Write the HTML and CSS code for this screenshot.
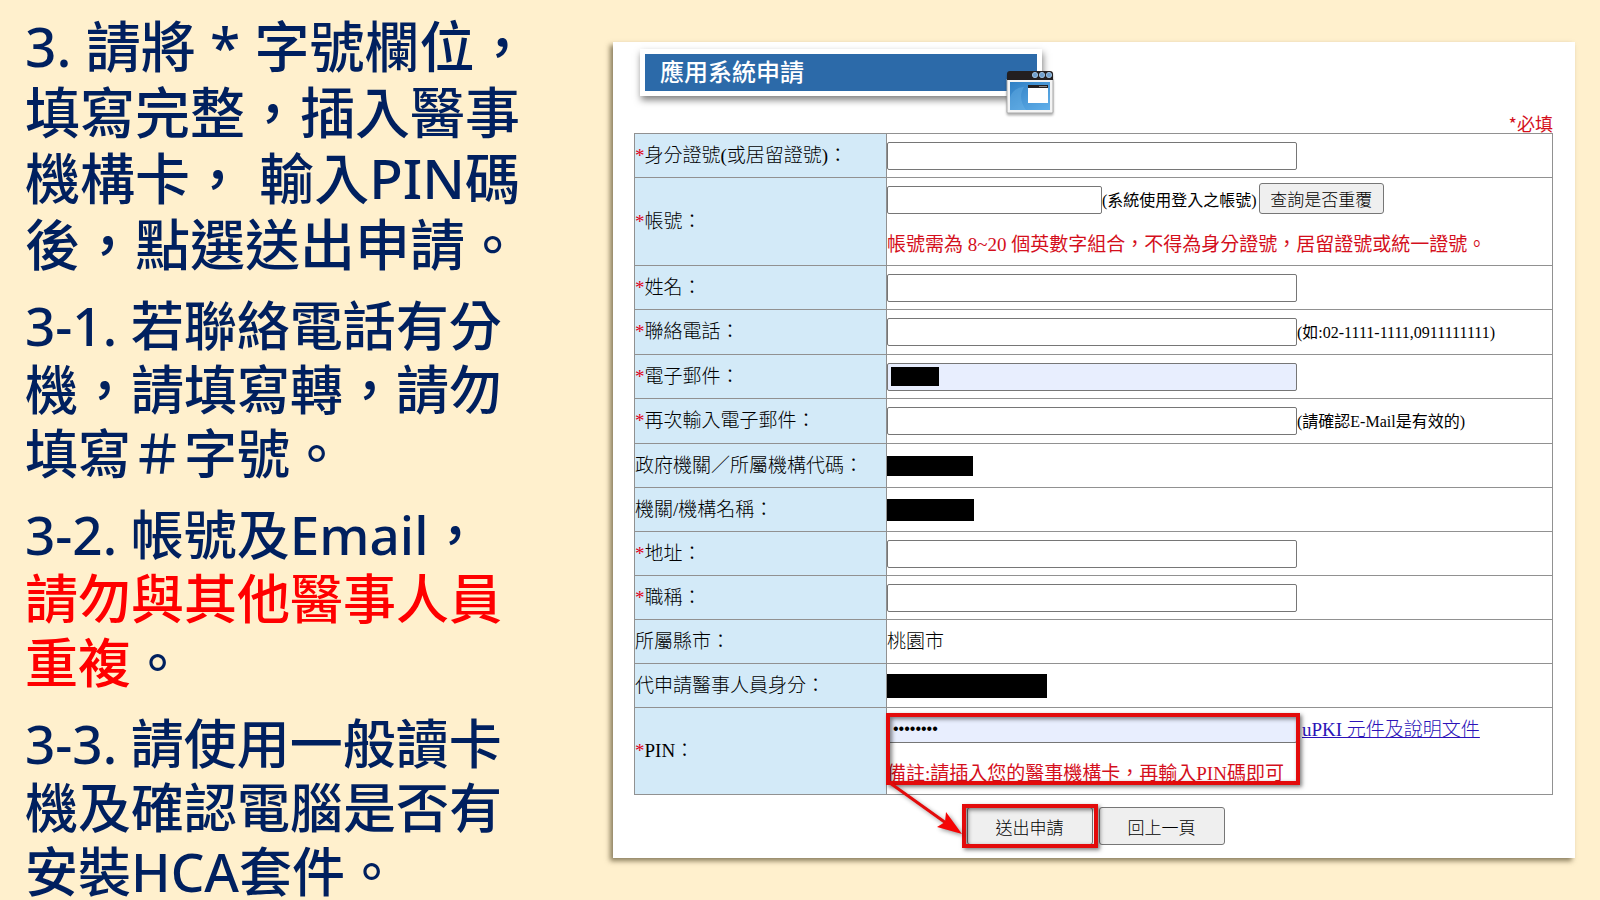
FILE: index.html
```html
<!DOCTYPE html>
<html lang="zh-Hant">
<head>
    <meta charset="UTF-8">
    <meta name="viewport" content="width=device-width, initial-scale=1.0">
    <title>應用系統申請</title>
    <link rel="stylesheet" href="styles.css">
</head>
<body>
<main class="slide">
    <section class="steps">
        <p class="step lead">3. 請將 * 字號欄位，<br>填寫完整，插入醫事<br>機構卡， 輸入PIN碼<br>後，點選送出申請。</p>
        <p class="step">3-1. 若聯絡電話有分<br>機，請填寫轉，請勿<br>填寫＃字號。</p>
        <p class="step">3-2. 帳號及Email，<br><span class="warn">請勿與其他醫事人員<br>重複</span>。</p>
        <p class="step">3-3. 請使用一般讀卡<br>機及確認電腦是否有<br>安裝HCA套件。</p>
    </section>

    <form class="panel">
        <header class="banner">
            <h1 class="banner-title">應用系統申請</h1>
            <svg class="banner-icon" viewBox="0 0 50 46" aria-hidden="true">
                <defs>
                    <linearGradient id="screen" x1="0" y1="0" x2="1" y2="1">
                        <stop offset="0" stop-color="#2f7fc4"/>
                        <stop offset="1" stop-color="#62b0ea"/>
                    </linearGradient>
                </defs>
                <path d="M2 9h46v33a1 1 0 0 1-1 1H3a1 1 0 0 1-1-1z" fill="#f4f4f4" stroke="#a9a9a9"/>
                <path d="M2 10V4a3 3 0 0 1 3-3h40a3 3 0 0 1 3 3v6z" fill="#231f20"/>
                <g fill="#6f9fce" stroke="#9dbddb">
                    <circle cx="30" cy="5" r="2.6"/>
                    <circle cx="37" cy="5" r="2.6"/>
                    <circle cx="44" cy="5" r="2.6"/>
                </g>
                <rect x="5" y="12" width="40" height="28" fill="url(#screen)"/>
                <path d="M5 40V28a14 14 0 0 1 14-11c-5 8-3 16 2 23z" fill="#7cc0f0" opacity=".3"/>
                <rect x="23" y="15" width="20" height="18" fill="#fff"/>
                <rect x="23" y="15" width="20" height="3" fill="#231f20"/>
                <rect x="34" y="16" width="8" height="1" fill="#888"/>
            </svg>
        </header>
        <div class="required-note">*必填</div>

        <table>
            <tr>
                <th><i>*</i><label for="idno">身分證號(或居留證號)：</label></th>
                <td><input type="text" id="idno"></td>
            </tr>
            <tr>
                <th><i>*</i><label for="account">帳號：</label></th>
                <td class="tall account">
                    <div class="line"><input type="text" id="account" class="short"><span class="hint">(系統使用登入之帳號)</span><button type="button" class="check">查詢是否重覆</button></div>
                    <div class="note">帳號需為 8~20 個英數字組合，不得為身分證號，居留證號或統一證號。</div>
                </td>
            </tr>
            <tr>
                <th><i>*</i><label for="fullname">姓名：</label></th>
                <td><input type="text" id="fullname"></td>
            </tr>
            <tr class="hinted">
                <th><i>*</i><label for="phone">聯絡電話：</label></th>
                <td><input type="text" id="phone"><span class="hint">(如:02-1111-1111,0911111111)</span></td>
            </tr>
            <tr>
                <th><i>*</i><label for="email">電子郵件：</label></th>
                <td>
                    <div class="masked-field">
                        <input type="email" id="email" class="filled">
                        <span class="mask mask-email"></span>
                    </div>
                </td>
            </tr>
            <tr class="hinted">
                <th><i>*</i><label for="email2">再次輸入電子郵件：</label></th>
                <td><input type="email" id="email2"><span class="hint">(請確認E-Mail是有效的)</span></td>
            </tr>
            <tr>
                <th>政府機關／所屬機構代碼：</th>
                <td><span class="mask mask-code"></span></td>
            </tr>
            <tr>
                <th>機關/機構名稱：</th>
                <td><span class="mask mask-org"></span></td>
            </tr>
            <tr>
                <th><i>*</i><label for="address">地址：</label></th>
                <td><input type="text" id="address"></td>
            </tr>
            <tr>
                <th><i>*</i><label for="jobtitle">職稱：</label></th>
                <td><input type="text" id="jobtitle"></td>
            </tr>
            <tr>
                <th>所屬縣市：</th>
                <td>桃園市</td>
            </tr>
            <tr>
                <th>代申請醫事人員身分：</th>
                <td><span class="mask mask-role"></span></td>
            </tr>
            <tr>
                <th><i>*</i><label for="pin">PIN：</label></th>
                <td class="tall pin">
                    <div class="line"><input type="password" id="pin" class="filled" value="12345678"><a href="#" class="doc-link">uPKI 元件及說明文件</a></div>
                    <div class="note">備註:請插入您的醫事機構卡，再輸入PIN碼即可</div>
                    <span class="marker marker-pin"></span>
                </td>
            </tr>
        </table>

        <div class="actions">
            <div class="submit-wrap">
                <button type="submit">送出申請</button>
                <span class="marker marker-submit"></span>
                <svg class="arrow" viewBox="0 0 76 58" aria-hidden="true">
                    <path d="M2 2L58 42" stroke="#e30b0b" stroke-width="3"/>
                    <path d="M74 53L49 46L57 41L58 31z" fill="#f50505"/>
                </svg>
            </div>
            <button type="button">回上一頁</button>
        </div>
    </form>
</main>
</body>
</html>
```
FILE: styles.css
```css
* {
    box-sizing: border-box;
}
body {
    margin: 0;
    background-color: #fff0cd;
    color: #000;
    font-family: "Liberation Serif", "Noto Sans CJK TC", serif;
    font-size: 19px;
}
.slide {
    display: grid;
    grid-template-columns: minmax(0, 588fr) minmax(0, 962fr);
    align-items: start;
    height: 100vh;
    padding: 0 25px;
    overflow: hidden;
}

/* Instructions */
.steps {
    padding-top: 13px;
    color: #00205f;
    font-family: "Noto Sans", "Noto Sans CJK TC", sans-serif;
    font-weight: 500;
    white-space: nowrap;
}
.step {
    margin: 0 0 17px;
    font-size: 53px;
    line-height: 64px;
}
.step:last-child {
    margin-bottom: 0;
}
.lead {
    font-size: 55px;
    line-height: 66px;
}
.warn {
    color: #ff0000;
}

/* Form panel */
.panel {
    margin-top: 42px;
    padding: 7px 22px 13px 21px;
    background-color: #fff;
    box-shadow: -3px 3px 5px rgba(60, 50, 20, 0.6);
}
.banner {
    position: relative;
    width: 402px;
    margin-left: 6px;
    padding: 5px;
    background-color: #fff;
    box-shadow: 1px 4px 7px rgba(0, 0, 0, 0.5);
}
.banner-title {
    margin: 0;
    padding: 2px 0 0 15px;
    background-color: #2c6aa9;
    color: #fff;
    font-size: 24px;
    font-weight: 500;
    line-height: 35px;
}
.banner-icon {
    position: absolute;
    right: -13px;
    bottom: -20px;
    width: 50px;
    height: 46px;
    filter: drop-shadow(0 2px 1px rgba(0, 0, 0, 0.3));
}
.required-note {
    margin-top: 17px;
    color: #d40f1c;
    font-family: "Noto Sans CJK TC", sans-serif;
    font-size: 18px;
    line-height: 20px;
    text-align: right;
}
table {
    width: 100%;
    border-collapse: collapse;
    table-layout: fixed;
}
th, td {
    height: 44px;
    padding: 0;
    border: 1px solid #919191;
    line-height: 26px;
    text-align: left;
    vertical-align: middle;
}
th {
    width: 252px;
    background-color: #d3eaf8;
    font-weight: 300;
    white-space: nowrap;
}
td {
    font-weight: 300;
    white-space: nowrap;
}
th i {
    color: #e00018;
    font-style: normal;
    font-weight: 400;
}
.hinted td {
    height: 45px;
}
input {
    width: 410px;
    height: 28px;
    padding: 1px 5px;
    border: 1px solid #767676;
    border-radius: 2px;
    background-color: #fff;
    font-size: 16px;
    vertical-align: middle;
}
.short {
    width: 215px;
}
.filled {
    background-color: #e8eefe;
}
.hint {
    font-size: 16px;
    font-weight: 400;
    vertical-align: middle;
}
.tall {
    position: relative;
    padding: 5px 0 7px;
}
.line {
    display: flex;
    align-items: flex-end;
}
.note {
    margin-top: 18px;
    color: #d40f1c;
    font-weight: 400;
}
.pin {
    padding-top: 7px;
}
.doc-link {
    margin-left: 5px;
    color: #2b12b8;
}

/* Blacked out values */
.mask {
    display: block;
    background-color: #000;
}
.masked-field {
    position: relative;
}
.mask-email {
    position: absolute;
    top: 5px;
    left: 4px;
    width: 48px;
    height: 19px;
}
.mask-code {
    width: 86px;
    height: 20px;
}
.mask-org {
    width: 87px;
    height: 22px;
}
.mask-role {
    width: 160px;
    height: 24px;
}

/* Buttons */
button {
    width: 126px;
    height: 38px;
    padding: 0;
    border: 1px solid #767676;
    border-radius: 3px;
    background-color: #efefef;
    color: #000;
    font-family: "Noto Sans CJK TC", sans-serif;
    font-size: 17px;
    font-weight: 300;
    cursor: pointer;
}
.check {
    width: 125px;
    height: 31px;
    margin-left: 2px;
}
.actions {
    display: flex;
    justify-content: center;
    gap: 6px;
    margin-top: 12px;
    padding-left: 4px;
}
.submit-wrap {
    position: relative;
}

/* Red call-outs drawn over the form */
.marker {
    position: absolute;
    border: 4px solid #e30b0b;
    box-shadow: 2px 2px 4px rgba(0, 0, 0, 0.5), inset 2px 2px 4px rgba(0, 0, 0, 0.5);
    pointer-events: none;
}
.marker-pin {
    top: 5px;
    left: -1px;
    width: 414px;
    height: 72px;
}
.marker-submit {
    inset: -3px -5px;
}
.arrow {
    position: absolute;
    right: 129px;
    bottom: 6px;
    width: 76px;
    height: 58px;
    filter: drop-shadow(2px 2px 2px rgba(0, 0, 0, 0.4));
}
```
